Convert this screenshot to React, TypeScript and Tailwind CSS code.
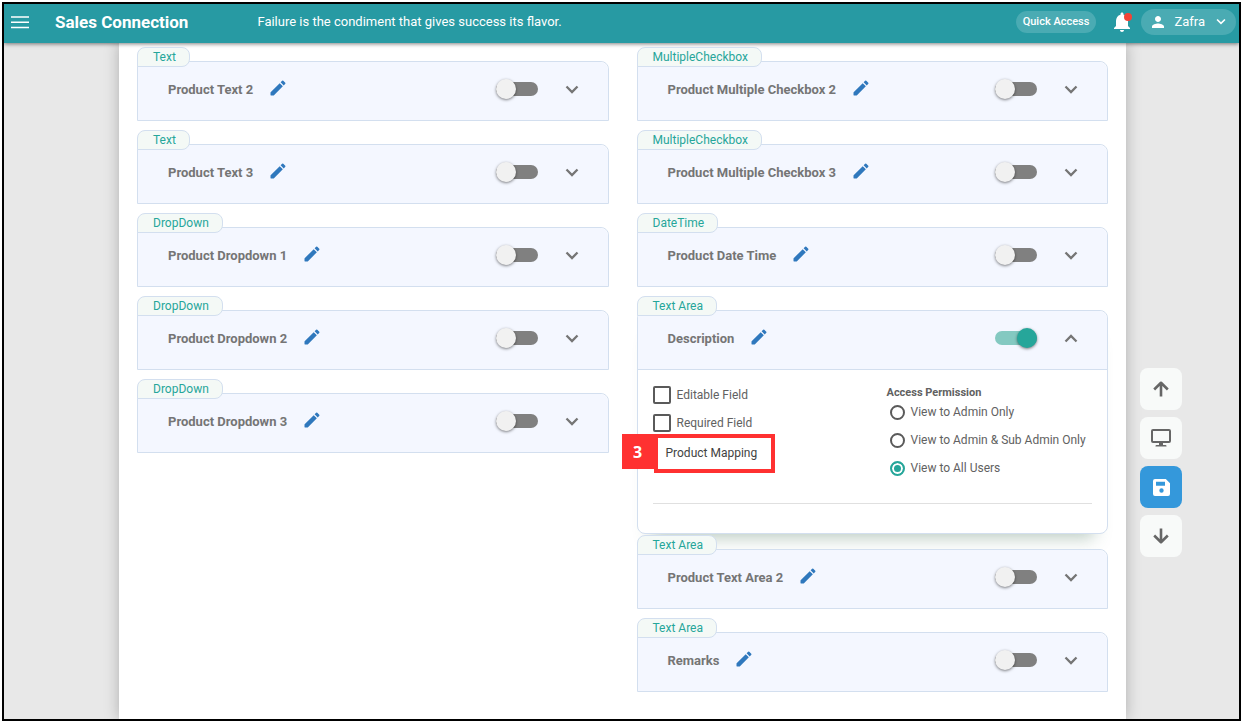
import React, { useState } from 'react';

interface Field {
  type: string;
  name: string;
  enabled?: boolean;
  open?: boolean;
}

const leftFields: Field[] = [
  { type: 'Text', name: 'Product Text 2' },
  { type: 'Text', name: 'Product Text 3' },
  { type: 'DropDown', name: 'Product Dropdown 1' },
  { type: 'DropDown', name: 'Product Dropdown 2' },
  { type: 'DropDown', name: 'Product Dropdown 3' },
];

const rightFields: Field[] = [
  { type: 'MultipleCheckbox', name: 'Product Multiple Checkbox 2' },
  { type: 'MultipleCheckbox', name: 'Product Multiple Checkbox 3' },
  { type: 'DateTime', name: 'Product Date Time' },
  { type: 'Text Area', name: 'Description', enabled: true, open: true },
  { type: 'Text Area', name: 'Product Text Area 2' },
  { type: 'Text Area', name: 'Remarks' },
];

const permissions = ['View to Admin Only', 'View to Admin & Sub Admin Only', 'View to All Users'];

const MenuIcon = () => (
  <svg width="20" height="14" viewBox="0 0 20 14" fill="none" stroke="currentColor" strokeWidth="1.5">
    <path d="M1 2h18M1 7.3h18M1 12.6h18" />
  </svg>
);

const BellIcon = () => (
  <svg width="24" height="24" viewBox="0 0 24 24" fill="currentColor">
    <path d="M12 22c1.1 0 2-.9 2-2h-4c0 1.1.89 2 2 2zm6-6v-5c0-3.07-1.64-5.64-4.5-6.32V4c0-.83-.67-1.5-1.5-1.5s-1.5.67-1.5 1.5v.68C7.63 5.36 6 7.92 6 11v5l-2 2v1h16v-1l-2-2z" />
  </svg>
);

const PersonIcon = () => (
  <svg width="18" height="18" viewBox="0 0 24 24" fill="currentColor">
    <path d="M12 12c2.21 0 4-1.79 4-4s-1.79-4-4-4-4 1.79-4 4 1.79 4 4 4zm0 2c-2.67 0-8 1.34-8 4v2h16v-2c0-2.66-5.33-4-8-4z" />
  </svg>
);

const ChevronIcon = ({ size = 14, up = false }: { size?: number; up?: boolean }) => (
  <svg width={size} height={size} viewBox="0 0 14 14" fill="none" stroke="currentColor" strokeWidth="2.3">
    <path d={up ? 'M1.5 9.5 7 4l5.5 5.5' : 'M1.5 3.5 7 9l5.5-5.5'} />
  </svg>
);

const PencilIcon = () => (
  <svg width="20" height="20" viewBox="0 0 24 24" fill="currentColor">
    <path d="M3 17.46v3.04c0 .28.22.5.5.5h3.04c.13 0 .26-.05.35-.15L17.81 9.94l-3.75-3.75L3.15 17.1c-.1.1-.15.22-.15.36z" />
    <path d="M20.71 7.04a1 1 0 0 0 0-1.41l-2.34-2.34a1 1 0 0 0-1.41 0l-1.83 1.83 3.75 3.75 1.83-1.83z" />
  </svg>
);

const ArrowIcon = ({ down = false }: { down?: boolean }) => (
  <svg width="16" height="16" viewBox="0 0 16 16" fill="none" stroke="currentColor" strokeWidth="2.6" strokeLinejoin="round">
    <path d={down ? 'M8 0.5V14M1.2 7.5 8 14.2l6.8-6.7' : 'M8 15.5V2M1.2 8.5 8 1.8l6.8 6.7'} />
  </svg>
);

const MonitorIcon = () => (
  <svg width="20" height="18" viewBox="0 0 20 18" fill="currentColor">
    <rect x="1" y="1" width="18" height="12" rx="1" fill="none" stroke="currentColor" strokeWidth="2" />
    <path d="M8 14h4v2h2.5a1 1 0 0 1 1 1v.5h-11V17a1 1 0 0 1 1-1H8z" />
  </svg>
);

const SaveIcon = () => (
  <svg width="17" height="17" viewBox="0 0 17 17" fill="currentColor" fillRule="evenodd">
    <path d="M2 0h10.8L17 4.2V15a2 2 0 0 1-2 2H2a2 2 0 0 1-2-2V2a2 2 0 0 1 2-2zM3 2.8v4h9v-4zM8.5 9.3a2.2 2.2 0 1 0 0 4.4 2.2 2.2 0 0 0 0-4.4z" />
  </svg>
);

const Header = () => (
  <header className="relative z-10 flex h-[39px] items-center bg-[#279aa3] pb-[3px] pl-[6px] pr-[3px] text-white shadow-[0_1px_4px_rgba(0,0,0,0.5)]">
    <button type="button" aria-label="Menu" className="w-5">
      <MenuIcon />
    </button>
    <h1 className="ml-[25px] text-[17px] leading-6 font-bold">Sales Connection</h1>
    <p className="ml-[69px] text-[13px]">Failure is the condiment that gives success its flavor.</p>
    <button type="button" className="ml-auto h-[22px] rounded-full bg-[#4aabb3] px-[7px] text-[11px] font-medium">
      Quick Access
    </button>
    <button type="button" aria-label="Notifications" className="relative ml-[14px]">
      <BellIcon />
      <span className="absolute right-[2px] top-[3px] h-2 w-2 rounded-full bg-[#f44336]" />
    </button>
    <button type="button" className="ml-[7px] flex h-[26px] items-center rounded-full bg-[#4aabb3] pl-2 pr-[10px] text-[13px]">
      <PersonIcon />
      <span className="ml-[7px] mr-[11px]">Zafra</span>
      <ChevronIcon size={10} />
    </button>
  </header>
);

const CheckRow = ({ label }: { label: string }) => (
  <label className="flex h-7 items-center gap-[6px]">
    <input type="checkbox" className="h-[18px] w-[18px] appearance-none rounded-[2px] border-2 border-[#5a5a5a] checked:bg-[#26a69a]" />
    {label}
  </label>
);

const FieldSettings = () => {
  const [permission, setPermission] = useState(permissions[2]);

  return (
    <div className="px-[15px] pb-[29px] pt-[11px] text-xs text-[#616161]">
      <div className="flex h-[123px] border-b border-[#e0e0e0]">
        <div className="w-[234px]">
          <CheckRow label="Editable Field" />
          <CheckRow label="Required Field" />
          <div className="relative -mt-[3px] ml-px flex h-[39px] w-[121px] items-center border-4 border-[#ff3131] bg-white pb-[2px] pl-2 text-[#424242]">
            Product Mapping
            <span className="absolute -left-9 -top-1 flex h-[35px] w-8 items-center justify-center bg-[#ff3131] font-['Open_Sans',sans-serif] text-base font-bold text-white">
              3
            </span>
          </div>
        </div>
        <fieldset>
          <legend className="pt-[6px] text-[11px] leading-[11px] font-bold">Access Permission</legend>
          {permissions.map((item) => (
            <label key={item} className="ml-[3px] flex h-7 items-center gap-[6px]">
              <input
                type="radio"
                name="permission"
                checked={permission === item}
                onChange={() => setPermission(item)}
                className="h-[15px] w-[15px] appearance-none rounded-full border-2 border-[#5a5a5a] checked:border-[#26a69a] checked:bg-[#26a69a] checked:shadow-[inset_0_0_0_2px_#fff]"
              />
              {item}
            </label>
          ))}
        </fieldset>
      </div>
    </div>
  );
};

const FieldCard = ({ type, name, enabled = false, open = false }: Field) => {
  const [isOn, setIsOn] = useState(enabled);
  const [isOpen, setIsOpen] = useState(open);

  return (
    <section className={`relative pt-[14px] ${isOpen ? 'mb-px' : 'mb-[9px]'}`}>
      <span className="absolute left-0 top-0 z-10 h-5 rounded-t-lg rounded-br-lg border border-[#d3dfef] bg-[#f4f9f6] pl-[15px] pr-[13px] text-xs leading-[18px] text-[#26a69a]">
        {type}
      </span>
      <div
        className={`border border-[#d3dfef] ${
          isOpen ? 'rounded-lg bg-white shadow-[0_18px_16px_-14px_rgba(60,110,80,0.35)]' : 'rounded-tr-lg'
        }`}
      >
        <div
          className={`flex items-center rounded-tr-lg bg-[#f4f7ff] pb-[3px] pl-[30px] pr-[29px] ${
            isOpen ? 'h-[59px] border-b border-[#d3dfef]' : 'h-[58px]'
          }`}
        >
          <h2 className="text-[13px] font-bold text-[#757575]">{name}</h2>
          <button type="button" aria-label={`Edit ${name}`} className="mb-1 ml-[15px] text-[#2f78bd]">
            <PencilIcon />
          </button>
          <input
            type="checkbox"
            role="switch"
            aria-label={`Enable ${name}`}
            checked={isOn}
            onChange={() => setIsOn(!isOn)}
            className="relative mb-px ml-auto h-[14px] w-[42px] appearance-none rounded-full bg-[#808080] before:absolute before:-top-[3px] before:left-0 before:h-5 before:w-5 before:rounded-full before:bg-[#f1f1f1] before:shadow-[0_1px_3px_rgba(0,0,0,0.5)] checked:bg-[#84c9c1] checked:before:left-[22px] checked:before:bg-[#26a69a]"
          />
          <button type="button" aria-label={`Toggle ${name}`} className="ml-[27px] text-[#757575]" onClick={() => setIsOpen(!isOpen)}>
            <ChevronIcon up={isOpen} />
          </button>
        </div>
        {isOpen && <FieldSettings />}
      </div>
    </section>
  );
};

const SideActions = () => (
  <nav className="flex flex-col gap-[7px] pl-[14px] pt-[325px] text-[#666666]">
    <button type="button" aria-label="Scroll up" className="flex h-[42px] w-[42px] items-center justify-center rounded-lg bg-[#f8faf9]">
      <ArrowIcon />
    </button>
    <button type="button" aria-label="Preview" className="flex h-[42px] w-[42px] items-center justify-center rounded-lg bg-[#f8faf9]">
      <MonitorIcon />
    </button>
    <button type="button" aria-label="Save" className="flex h-[42px] w-[42px] items-center justify-center rounded-lg bg-[#3498db] text-white">
      <SaveIcon />
    </button>
    <button type="button" aria-label="Scroll down" className="flex h-[42px] w-[42px] items-center justify-center rounded-lg bg-[#f8faf9]">
      <ArrowIcon down />
    </button>
  </nav>
);

export default function App() {
  return (
    <div className="flex h-screen bg-white pb-px pl-[2px] pr-[3px] pt-[2px] font-['Roboto',sans-serif]">
      <div className="flex flex-1 flex-col overflow-hidden border-2 border-black bg-[#e8e8e8]">
        <Header />
        <div className="flex flex-1">
          <main className="ml-[115px] grid flex-1 grid-cols-2 items-start gap-x-7 bg-white px-[18px] pt-1 shadow-[0_0_14px_rgba(0,0,0,0.25)]">
            <div>
              {leftFields.map((field) => (
                <FieldCard key={field.name} {...field} />
              ))}
            </div>
            <div>
              {rightFields.map((field) => (
                <FieldCard key={field.name} {...field} />
              ))}
            </div>
          </main>
          <aside className="w-[113px]">
            <SideActions />
          </aside>
        </div>
      </div>
    </div>
  );
}
